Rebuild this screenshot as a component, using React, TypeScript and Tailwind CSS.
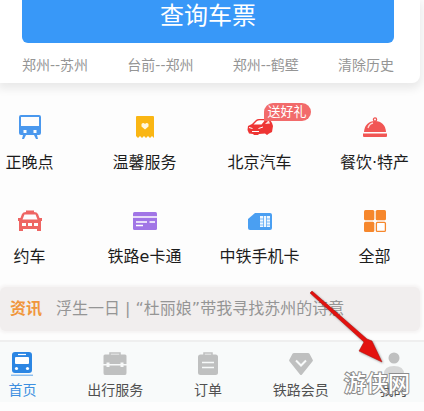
import type { ReactNode } from 'react';

const routes = ['郑州--苏州', '台前--郑州', '郑州--鹤壁'];

type Item = { label: string; icon: ReactNode; badge?: string };

const services: Item[] = [
  {
    label: '正晚点',
    icon: (
      <svg viewBox="0 0 24 24" className="w-6 h-6" fill="#4a98ee">
        <path
          fillRule="evenodd"
          d="M3 0h18a2 2 0 0 1 2 2v16a2 2 0 0 1-2 2H3a2 2 0 0 1-2-2V2a2 2 0 0 1 2-2ZM3 2v9h18V2ZM5.500 15v3h3v-3ZM15.500 15v3h3v-3Z"
        />
        <path d="M5 20h3l-2 4H4ZM16 20h3l1 4h-2Z" />
      </svg>
    ),
  },
  {
    label: '温馨服务',
    icon: (
      <svg viewBox="0 0 24 24" className="w-6 h-6">
        <path d="M4 1h16a1 1 0 0 1 1 1v21l-2-2-2 2-2-2-2 2-2-2-2 2-2-2-2 2-2-2V2a1 1 0 0 1 1-1Z" fill="#fab614" />
        <path d="M12 14.500l-3.500-3V9c1-1.200 2.500-1.200 3.500 0 1-1.200 2.500-1.200 3.500 0v2.500Z" fill="#fff7e0" />
      </svg>
    ),
  },
  {
    label: '北京汽车',
    badge: '送好礼',
    icon: (
      <svg viewBox="0 0 26 24" className="w-[26px] h-6">
        <path d="M1 11 5 9l4-4q1-1 3-1h8q3 0 5 4l1 3-1 6-3 1.500-2 1.500-2-1.500-6 .5-1 1H7l-1-1-4-.5L.500 15Z" fill="#ee3534" />
        <path d="M6.500 9.500 10 6q1-.8 3-.8h5L14.500 9.500Z" fill="#fff" />
        <path d="M18 9l3-3h1l1 2.500Z" fill="#ffe3e1" />
        <path d="M2 12.500l3.500 1M11.500 13.500l4.500-1.500M5 16.500h7" stroke="#fff" strokeWidth="1" fill="none" />
      </svg>
    ),
  },
  {
    label: '餐饮·特产',
    icon: (
      <svg viewBox="0 0 24 24" className="w-6 h-6">
        <circle cx="12" cy="4.500" r="1.600" fill="none" stroke="#ef5350" strokeWidth="1.300" />
        <path d="M1 17C1.500 10 5.500 6 12 6s10.500 4 11 11Z" fill="#f15654" />
        <path d="M5 13q1-4 5-5" stroke="#ffd8d6" strokeWidth="1.300" fill="none" />
        <path d="M0 18.500h24V21q0 1-1 1H1q-1 0-1-1Z" fill="#f15654" />
      </svg>
    ),
  },
  {
    label: '约车',
    icon: (
      <svg viewBox="0 0 24 24" className="w-6 h-6" fill="#ee6563">
        <path
          fillRule="evenodd"
          d="M8 3V1.500h8V3q3 0 4 2l1.500 4H24v3h-1v10h-4v-2H5v2H1V12H0V9h2.500L4 5q1-2 4-2ZM6.500 5.500 4.500 10.500h15l-2-5ZM4 14v3h4v-3ZM10 14v3h4v-3ZM16 14v3h4v-3Z"
        />
      </svg>
    ),
  },
  {
    label: '铁路e卡通',
    icon: (
      <svg viewBox="0 0 24 24" className="w-6 h-6">
        <rect y="3" width="24" height="18" rx="1.500" fill="#a175e6" />
        <path d="M0 8h24M3 13h11M16.500 13H22M3 16.500h7" stroke="#fff" strokeWidth="1.300" />
      </svg>
    ),
  },
  {
    label: '中铁手机卡',
    icon: (
      <svg viewBox="0 0 24 24" className="w-6 h-6">
        <path d="M7 4h15q2 0 2 2v13q0 2-2 2H2q-2 0-2-2v-9Z" fill="#4a9ff2" />
        <path d="M12 7h10v11H12Z" fill="#eef7ff" />
        <path d="M12 10h3.500M12 13h3.500M12 16h3.500M18.500 10H22M18.500 13H22M18.500 16H22M15.500 7v11M18.500 7v11" stroke="#4a9ff2" strokeWidth=".7" />
      </svg>
    ),
  },
  {
    label: '全部',
    icon: (
      <svg viewBox="0 0 24 24" className="w-6 h-6" fill="#f6872c">
        <rect x="1" y="1" width="10.300" height="10.300" rx="1.500" />
        <rect x="12.700" y="1" width="10.300" height="10.300" rx="1.500" />
        <rect x="1" y="12.700" width="10.300" height="10.300" rx="1.500" />
        <rect x="13.400" y="13.400" width="9" height="9" rx="1" fill="#fff" stroke="#f6872c" strokeWidth="1.300" />
      </svg>
    ),
  },
];

const tabs: Item[] = [
  {
    label: '首页',
    icon: (
      <svg viewBox="0 0 24 24" className="w-6 h-6">
        <path d="M5 0h14q3 0 3 3v15q0 3-3 3H5q-3 0-3-3V3q0-3 3-3Z" fill="#2c86e3" />
        <path d="M8 2.500h8" stroke="#fff" strokeWidth="1.200" />
        <rect x="5" y="5" width="14" height="7" rx="1" fill="#fff" />
        <circle cx="6.500" cy="16.500" r="1.600" fill="#fff" />
        <circle cx="17.500" cy="16.500" r="1.600" fill="#fff" />
        <path d="M1 23.200h22" stroke="#5aa2ea" strokeWidth="1" />
      </svg>
    ),
  },
  {
    label: '出行服务',
    icon: (
      <svg viewBox="0 0 24 24" className="w-6 h-6" fill="#bfc0c0">
        <path d="M7 3V1h10v2" fill="none" stroke="#bfc0c0" strokeWidth="1.500" />
        <path d="M2 2.500h20q1.500 0 1.500 1.500v8h-3v-1.500h-3V12h-11v-1.500h-3V12H.5V4Q.5 2.500 2 2.500Z" />
        <path d="M.5 13.500h3V15h3v-1.500h11V15h3v-1.500h3v7.500q0 2-1.500 2H2Q.5 23 .5 21Z" />
      </svg>
    ),
  },
  {
    label: '订单',
    icon: (
      <svg viewBox="0 0 24 24" className="w-6 h-6">
        <path d="M8 3V1h8v2" fill="none" stroke="#bfc0c0" strokeWidth="1.500" />
        <rect x="2" y="2.500" width="20" height="20.500" rx="2.500" fill="#bfc0c0" />
        <path d="M6 10.500h12M6 15.500h12" stroke="#f8fafa" strokeWidth="1.500" />
      </svg>
    ),
  },
  {
    label: '铁路会员',
    icon: (
      <svg viewBox="0 0 24 24" className="w-6 h-6">
        <path d="M5 1h14q1 0 1.500.700l3.200 6q.5 1-.3 1.800L13 22.500q-1 1-2 0L.6 9.500Q-.2 8.700.3 7.700l3.200-6Q4 1 5 1Z" fill="#bfc0c0" />
        <path d="M7 8.500l5 5 5-5" fill="none" stroke="#f8fafa" strokeWidth="2" />
      </svg>
    ),
  },
  {
    label: '我的',
    icon: (
      <svg viewBox="0 0 24 24" className="w-6 h-6" fill="#bfc0c0">
        <circle cx="12" cy="6" r="5.500" />
        <path d="M2 22q0-8 10-8t10 8Z" opacity=".6" />
      </svg>
    ),
  },
];

export default function App() {
  return (
    <div className="relative overflow-hidden bg-[#fdfdfd] font-['DejaVu_Sans','Noto_Sans_CJK_SC',sans-serif] text-[#1c1c1c]">
      {/* Ticket search card */}
      <section className="mr-1 rounded-br-lg bg-white pl-[22px] pr-[26px] shadow-[0_4px_8px_2px_rgba(0,0,0,0.08)]">
        <button type="button" className="block h-[43px] w-full rounded-b-md bg-[#3898f8] pb-3 text-2xl leading-8 text-white">
          查询车票
        </button>
        <div className="flex h-10 items-center justify-between pt-3 pb-2 text-sm text-[#959595]">
          {routes.map((route) => (
            <button type="button" key={route}>{route}</button>
          ))}
          <button type="button">清除历史</button>
        </div>
      </section>

      {/* Service shortcuts */}
      <section className="-ml-7 -mr-2 mt-8 grid grid-cols-4 gap-y-6">
        {services.map(({ label, icon, badge }) => (
          <a href="#" key={label} className="relative flex h-[70px] flex-col items-center gap-3">
            {icon}
            <span className="whitespace-nowrap text-base leading-6">{label}</span>
            {badge && (
              <span className="absolute left-1/2 -top-3 ml-1 h-[18px] rounded-full rounded-bl-none bg-[#f26b6b] px-1 text-[13px] leading-[18px] text-white">
                {badge}
              </span>
            )}
          </a>
        ))}
      </section>

      {/* News strip */}
      <a href="#" className="mt-2 mr-1 flex h-11 items-center gap-[14px] rounded-md bg-[#f1eeee] pl-[10px] shadow-[0_0_3px_2px_#f5f3f3]">
        <strong className="text-base font-bold text-[#f0963c]">资讯</strong>
        <span className="whitespace-nowrap text-base text-[#959595]">浮生一日 | “杜丽娘”带我寻找苏州的诗意</span>
      </a>

      {/* Bottom tabs */}
      <nav className="mt-[9px] mb-[10px] border-t-2 border-[#efefef] bg-[#f8fafa]">
        <div className="-ml-6 -mr-4 grid h-[60px] grid-cols-5">
          {tabs.map(({ label, icon }, i) => (
            <a href="#" key={label} className={`flex flex-col items-center gap-1 pt-[10px] text-sm ${i === 0 ? 'text-[#3d8fe0]' : 'text-[#505050]'}`}>
              {icon}
              <span className="leading-5">{label}</span>
            </a>
          ))}
        </div>
      </nav>

      {/* Watermark */}
      <span className="absolute right-[14px] bottom-3 text-[22px] font-medium leading-8 text-white [-webkit-text-stroke:2px_#8c8c8c] [paint-order:stroke_fill]">
        游侠网
      </span>

      {/* Pointer to the profile tab */}
      <svg viewBox="0 0 76 76" className="absolute right-10 bottom-12 h-[76px] w-[76px] drop-shadow-[1px_1px_1px_rgba(0,0,0,0.35)]">
        <path d="M2 5 4 3 59 51 64 53 74 74 51 63 56 54Z" fill="#e3120f" stroke="#a90e0c" strokeWidth=".5" />
      </svg>
    </div>
  );
}
